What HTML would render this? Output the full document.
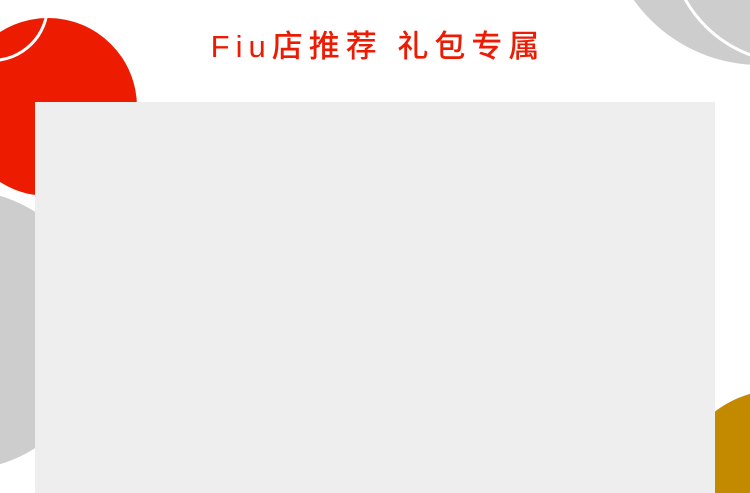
<!DOCTYPE html>
<html><head><meta charset="utf-8"><style>
html,body{margin:0;padding:0;width:750px;height:493px;overflow:hidden}
body{background:#fff}
#w{position:relative;width:750px;height:493px;overflow:hidden;contain:paint}
.c{position:absolute;border-radius:50%}
.t{position:absolute;left:0;width:750px;top:26px;text-align:center;color:#eb1c03;font:500 31px/42px "Liberation Sans","Noto Sans CJK SC",sans-serif;letter-spacing:6px;padding-left:6px;box-sizing:border-box;white-space:nowrap}
</style></head><body><div id="w">
<div class="c" style="left:-180px;top:190px;width:280px;height:280px;background:#cdcdcd"></div>
<div class="c" style="left:-41px;top:18px;width:178px;height:178px;background:#ed1c00;overflow:hidden">
  <div class="c" style="left:-24px;top:-70px;width:114px;height:114px;border:3px solid #fff;box-sizing:border-box"></div>
</div>
<div class="c" style="left:605px;top:-245px;width:310px;height:310px;background:#cdcdcd"></div>
<div class="c" style="left:668px;top:-186px;width:250px;height:250px;border:3px solid #fff;box-sizing:border-box"></div>
<div class="c" style="left:675px;top:390px;width:250px;height:103px;border-radius:125px 125px 0 0/125px 125px 0 0;background:#c38a00"></div>
<div style="position:absolute;left:35px;top:102px;width:680px;height:391px;background:#eeeeee"></div>
<div class="t">Fiu店推荐 礼包专属</div>
</div></body></html>
